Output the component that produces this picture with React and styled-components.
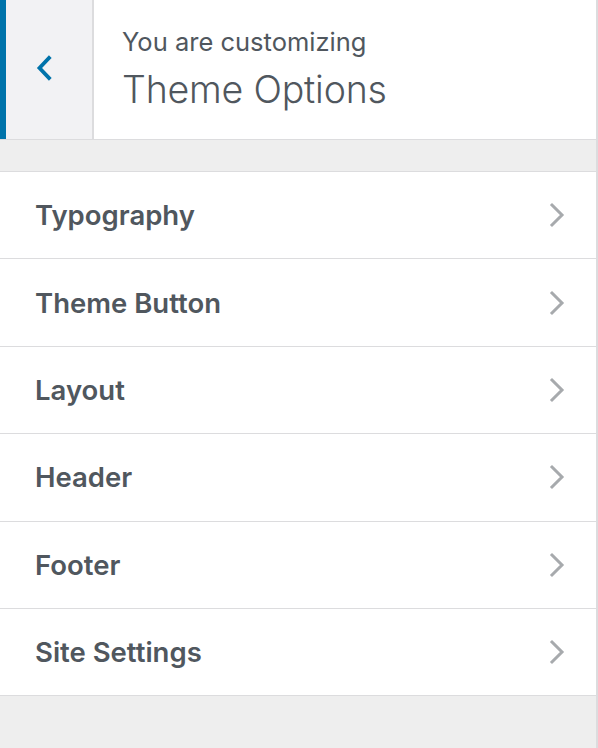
import React from "react";
import styled, { createGlobalStyle } from "styled-components";

const GlobalStyle = createGlobalStyle`
  html, body {
    margin: 0;
    padding: 0;
    background: #ffffff;
  }
  * {
    box-sizing: border-box;
  }
`;

const SECTIONS = [
  "Typography",
  "Theme Button",
  "Layout",
  "Header",
  "Footer",
  "Site Settings",
];

const Panel = styled.div`
  display: flex;
  flex-direction: column;
  width: 598px;
  min-height: 748px;
  background: #eeeeee;
  border-right: 2px solid #dcdcde;
  font-family: Inter, "Noto Sans", "Liberation Sans", sans-serif;
`;

const Header = styled.div`
  display: flex;
  flex-direction: row;
  height: 140px;
  background: #ffffff;
  border-bottom: 1px solid #dcdcde;
`;

const BackButton = styled.button`
  display: flex;
  align-items: center;
  justify-content: center;
  width: 94px;
  padding: 0 10px 4px 0;
  margin: 0;
  background: #f2f2f4;
  border: none;
  border-left: 6px solid #0073aa;
  border-right: 2px solid #dcdcde;
  cursor: pointer;
`;

const TitleBlock = styled.div`
  display: flex;
  flex-direction: column;
  justify-content: center;
  padding: 0 0 0 28px;
`;

const Subtitle = styled.span`
  font-size: 25.5px;
  font-weight: 400;
  color: #50575e;
  line-height: 30px;
`;

const Title = styled.h1`
  margin: 11px 0 0 0;
  font-size: 37.5px;
  font-weight: 300;
  color: #50575e;
  line-height: 44px;
  letter-spacing: -0.2px;
`;

const Gap = styled.div`
  height: 31px;
`;

const SectionList = styled.ul`
  list-style: none;
  margin: 0;
  padding: 0;
  border-top: 1px solid #dcdcde;
`;

const SectionRow = styled.li`
  display: flex;
  flex-direction: row;
  align-items: center;
  justify-content: space-between;
  height: 87.4px;
  padding: 0 30px 0 35px;
  background: #ffffff;
  border-bottom: 1px solid #dcdcde;
  cursor: pointer;
`;

const SectionLabel = styled.span`
  font-size: 27.5px;
  font-weight: 600;
  color: #50575e;
`;

function BackIcon() {
  return (
    <svg width="20" height="28" viewBox="0 0 20 28">
      <polyline
        points="15,4 5.5,14 15,24"
        fill="none"
        stroke="#0073aa"
        strokeWidth="3.8"
        strokeLinecap="square"
        strokeLinejoin="miter"
      />
    </svg>
  );
}

function ChevronIcon() {
  return (
    <svg width="18" height="28" viewBox="0 0 18 28">
      <polyline
        points="4,4 14,14 4,24"
        fill="none"
        stroke="#a7aaad"
        strokeWidth="3"
        strokeLinecap="square"
        strokeLinejoin="miter"
      />
    </svg>
  );
}

export default function App() {
  return (
    <>
      <GlobalStyle />
      <Panel>
        <Header>
          <BackButton aria-label="Back">
            <BackIcon />
          </BackButton>
          <TitleBlock>
            <Subtitle>You are customizing</Subtitle>
            <Title>Theme Options</Title>
          </TitleBlock>
        </Header>
        <Gap />
        <SectionList>
          {SECTIONS.map((name) => (
            <SectionRow key={name}>
              <SectionLabel>{name}</SectionLabel>
              <ChevronIcon />
            </SectionRow>
          ))}
        </SectionList>
      </Panel>
    </>
  );
}
